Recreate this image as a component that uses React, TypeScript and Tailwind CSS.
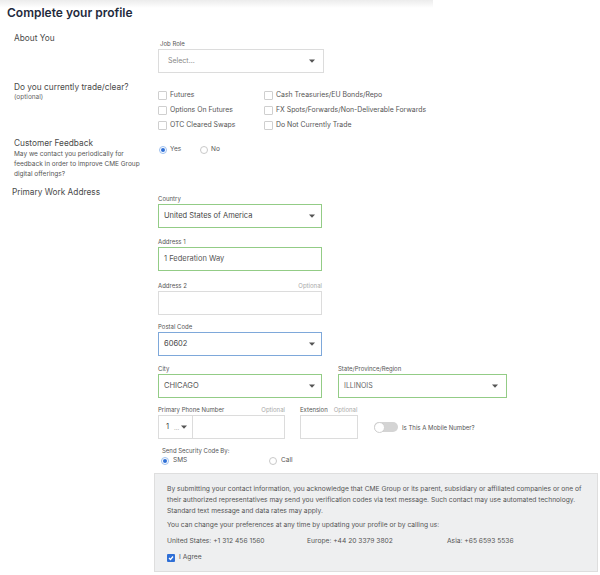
import React from "react";

const Caret = () => (
  <svg width="6" height="4" viewBox="0 0 6 4" className="shrink-0">
    <path d="M0 0.5 L6 0.5 L3 3.8 Z" fill="#555" />
  </svg>
);

const Checkbox = ({ checked = false }: { checked?: boolean }) =>
  checked ? (
    <span className="flex h-[8px] w-[8px] items-center justify-center rounded-[1px] bg-[#2f6fd6]">
      <svg width="6" height="6" viewBox="0 0 6 6">
        <path d="M1 3 L2.5 4.5 L5 1.5" stroke="#fff" strokeWidth="1.2" fill="none" />
      </svg>
    </span>
  ) : (
    <span className="block h-[9px] w-[9px] rounded-[1px] border border-[#cfcfcf] bg-white" />
  );

const Radio = ({ checked = false }: { checked?: boolean }) => (
  <span
    className={
      checked
        ? "flex h-[8px] w-[8px] items-center justify-center rounded-full border border-[#9ec0ef] bg-white"
        : "block h-[8px] w-[8px] rounded-full border border-[#c9c9c9] bg-white"
    }
  >
    {checked && <span className="block h-[4px] w-[4px] rounded-full bg-[#2f6fd6]" />}
  </span>
);

const Label = ({ children, optional }: { children: React.ReactNode; optional?: boolean }) => (
  <div className="mb-[1px] flex h-[8px] items-center justify-between text-[6px] leading-[8px] text-[#555]">
    <span>{children}</span>
    {optional && <span className="text-[#aaa]">Optional</span>}
  </div>
);

export default function App() {
  return (
    <div
      className="relative h-[575px] w-[600px] overflow-hidden bg-white text-[#444]"
      style={{ fontFamily: "Inter, 'Open Sans', sans-serif" }}
    >
      <div className="absolute left-0 top-0 h-[8px] w-[433px] bg-gradient-to-b from-[#ececec] to-white" />
      {/* header */}
      <div className="relative pl-[7px] pt-[3px]">
        <h1 className="text-[12px] font-semibold leading-[20px] text-[#1f2b3d]">Complete your profile</h1>
      </div>

      {/* About You */}
      <div className="mt-[9px] flex">
        <div className="w-[158px] pl-[14px] text-[8.3px] leading-[12px] text-[#4a4a4a]">About You</div>
        <div className="pt-[8px]">
          <div className="pl-[2px]">
            <Label>Job Role</Label>
          </div>
          <div className="flex h-[24px] w-[166px] items-center justify-between border border-[#dcdcdc] pl-[9px] pr-[8px] text-[7px] text-[#888]">
            <span>Select...</span>
            <Caret />
          </div>
        </div>
      </div>

      {/* trade */}
      <div className="mt-[8px] flex">
        <div className="w-[158px] pl-[14px]">
          <div className="text-[8.3px] leading-[12px] text-[#4a4a4a]">Do you currently trade/clear?</div>
          <div className="text-[6.5px] leading-[8px] text-[#666]">(optional)</div>
        </div>
        <div className="grid grid-cols-[106px_auto] pt-[7px] text-[6.9px] text-[#555]">
          {[
            "Futures",
            "Cash Treasuries/EU Bonds/Repo",
            "Options On Futures",
            "FX Spots/Forwards/Non-Deliverable Forwards",
            "OTC Cleared Swaps",
            "Do Not Currently Trade",
          ].map((t) => (
            <div key={t} className="flex h-[15px] items-center gap-[3px]">
              <Checkbox />
              <span>{t}</span>
            </div>
          ))}
        </div>
      </div>

      {/* Customer Feedback */}
      <div className="mt-[4px] flex">
        <div className="w-[158px] pl-[14px]">
          <div className="text-[8.3px] leading-[12px] text-[#4a4a4a]">Customer Feedback</div>
          <div className="whitespace-nowrap text-[6.5px] leading-[10px] text-[#555]">
            May we contact you periodically for
            <br />
            feedback in order to improve CME Group
            <br />
            digital offerings?
          </div>
        </div>
        <div className="mt-[8px] flex h-[10px] items-center pl-[1px] text-[6.5px] text-[#555]">
          <div className="flex w-[41px] items-center gap-[3px]">
            <Radio checked />
            <span>Yes</span>
          </div>
          <div className="flex items-center gap-[3px]">
            <Radio />
            <span>No</span>
          </div>
        </div>
      </div>

      {/* Primary Work Address */}
      <div className="mt-[7px] flex">
        <div className="w-[158px] pl-[12px] text-[8.3px] leading-[12px] text-[#4a4a4a]">Primary Work Address</div>
        <div className="pt-[9px]">
          <div className="w-[164px]">
            <Label>Country</Label>
            <div className="flex h-[24px] items-center justify-between border border-[#93cc86] pl-[5px] pr-[6px] text-[7.5px] text-[#444]">
              <span>United States of America</span>
              <Caret />
            </div>
          </div>
          <div className="mt-[10px] w-[164px]">
            <Label>Address 1</Label>
            <div className="flex h-[24px] items-center border border-[#93cc86] pl-[5px] text-[7.5px] text-[#555]">
              1 Federation Way
            </div>
          </div>
          <div className="mt-[11px] w-[164px]">
            <Label optional>Address 2</Label>
            <div className="h-[24px] border border-[#dcdcdc]" />
          </div>
          <div className="mt-[8px] w-[164px]">
            <Label>Postal Code</Label>
            <div className="flex h-[24px] items-center justify-between border border-[#7ea8da] pl-[5px] pr-[6px] text-[7.5px] text-[#444]">
              <span>60602</span>
              <Caret />
            </div>
          </div>
          <div className="mt-[9px] flex gap-[16px]">
            <div className="w-[164px]">
              <Label>City</Label>
              <div className="flex h-[24px] items-center justify-between border border-[#93cc86] pl-[5px] pr-[6px] text-[7.5px] text-[#555]">
                <span>CHICAGO</span>
                <Caret />
              </div>
            </div>
            <div className="w-[169px]">
              <Label>State/Province/Region</Label>
              <div className="flex h-[24px] items-center justify-between border border-[#93cc86] pl-[5px] pr-[8px] text-[7px] text-[#666]">
                <span>ILLINOIS</span>
                <Caret />
              </div>
            </div>
          </div>
          <div className="mt-[8px] flex items-end">
            <div className="w-[127px]">
              <Label optional>Primary Phone Number</Label>
              <div className="flex h-[24px] border border-[#dcdcdc]">
                <div className="flex w-[34px] items-center border-r border-[#dcdcdc] pl-[7px] text-[7.5px] text-[#444]">
                  <span>1</span>
                  <span className="ml-[5px] text-[6px] text-[#777]">...</span>
                  <span className="ml-[2px]">
                    <Caret />
                  </span>
                </div>
              </div>
            </div>
            <div className="ml-[15px] w-[58px]">
              <div className="mb-[1px] flex h-[8px] items-center text-[6px] leading-[8px] text-[#555]">
                <span>Extension</span>
                <span className="ml-[6px] text-[#aaa]">Optional</span>
              </div>
              <div className="h-[24px] border border-[#dcdcdc]" />
            </div>
            <div className="ml-[16px] flex h-[24px] items-center gap-[4px] text-[6px] text-[#555]">
              <div className="relative h-[10px] w-[24px] rounded-full bg-[#d4d4d4]">
                <div className="absolute left-0 top-[-0.5px] h-[11px] w-[11px] rounded-full border border-[#cfcfcf] bg-white" />
              </div>
              <span>Is This A Mobile Number?</span>
            </div>
          </div>
        </div>
      </div>

      {/* Security code */}
      <div className="ml-[162px] mt-[8px] text-[6px] leading-[8px] text-[#555]">Send Security Code By:</div>
      <div className="ml-[161px] mt-[1px] flex h-[10px] items-center text-[6.5px] text-[#555]">
        <div className="flex w-[108px] items-center gap-[4px]">
          <Radio checked />
          <span>SMS</span>
        </div>
        <div className="flex items-center gap-[4px]">
          <Radio />
          <span>Call</span>
        </div>
      </div>

      {/* consent box */}
      <div className="ml-[154px] mt-[7px] w-[444px] border border-[#dedede] bg-[#eeeff0] pb-[8px] pl-[12px] pr-[8px] pt-[10px] text-[6.7px] leading-[11px] text-[#555]">
        <p className="whitespace-nowrap">
          By submitting your contact information, you acknowledge that CME Group or its parent, subsidiary or affiliated companies or one of
          <br />
          their authorized representatives may send you verification codes via text message. Such contact may use automated technology.
          <br />
          Standard text message and data rates may apply.
        </p>
        <p className="mt-[3px]">You can change your preferences at any time by updating your profile or by calling us:</p>
        <div className="mt-[5px] flex">
          <span className="w-[140px]">United States: +1 312 456 1560</span>
          <span className="w-[140px]">Europe: +44 20 3379 3802</span>
          <span>Asia: +65 6593 5536</span>
        </div>
        <div className="mt-[5px] flex items-center gap-[4px]">
          <Checkbox checked />
          <span>I Agree</span>
        </div>
      </div>
    </div>
  );
}
